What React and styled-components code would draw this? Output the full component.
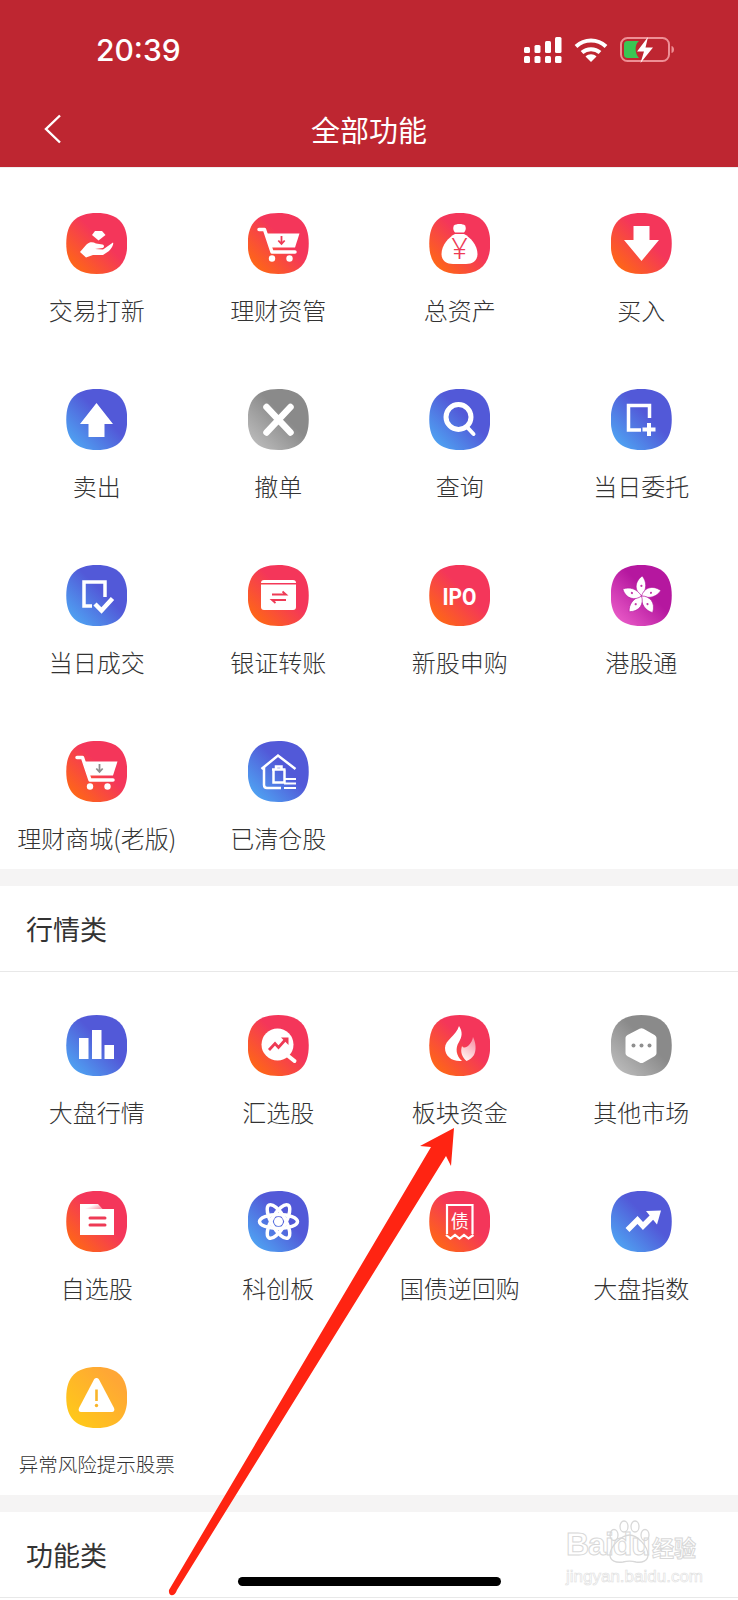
import React from 'react';
import styled, { createGlobalStyle } from 'styled-components';

const GlobalStyle = createGlobalStyle`
    html, body {
        margin: 0;
        padding: 0;
        background: #fff;
    }
    * {
        box-sizing: border-box;
    }
`;

const tones = {
    red: 'linear-gradient(45deg, #ff6a12 8%, #f4365a 58%)',
    blue: 'linear-gradient(45deg, #4fa6f3 8%, #5259d8 58%)',
    gray: 'linear-gradient(45deg, #bcbcbc 8%, #8a8a8a 58%)',
    pink: 'linear-gradient(45deg, #ea5cc8 8%, #b5179f 58%)',
    yellow: 'linear-gradient(45deg, #ffca18 8%, #ffa735 80%)',
};

const RED = '#ee3a55';

const Page = styled.div`
    position: relative;
    width: 738px;
    height: 1600px;
    overflow: hidden;
    background: #fff;
    font-family: "Noto Sans CJK SC", "Noto Sans", sans-serif;
`;

const Header = styled.header`
    height: 168px;
    background: #be2631;
    border-bottom: 1px solid #f1eeee;
    color: #fff;
`;

const StatusBar = styled.div`
    display: flex;
    align-items: center;
    justify-content: space-between;
    height: 96px;
    padding: 4px 0 0 96px;
`;

const Clock = styled.span`
    font-family: Inter, "Liberation Sans", sans-serif;
    font-size: 30px;
    font-weight: 500;
`;

const Icons = styled.div`
    display: flex;
    align-items: center;
    gap: 12px;
    padding-right: 62px;
`;

const NavBar = styled.div`
    position: relative;
    display: flex;
    align-items: center;
    justify-content: center;
    height: 66px;
`;

const BackIcon = styled.svg`
    position: absolute;
    left: 44px;
    top: 18px;
`;

const Title = styled.h1`
    margin: 0;
    font-size: 29px;
    font-weight: 400;
`;

const Grid = styled.div`
    display: grid;
    grid-template-columns: repeat(4, 1fr);
    row-gap: 63px;
    padding: ${(p) => (p.$first ? '45px' : '43px')} 6px 15px;
`;

const Cell = styled.div`
    display: flex;
    flex-direction: column;
    align-items: center;
`;

const Tile = styled.div`
    width: 61px;
    height: 61px;
    background: ${(p) => tones[p.$tone]};
    clip-path: path('M30.5 0C51 0 61 10 61 30.5C61 51 51 61 30.5 61C10 61 0 51 0 30.5C0 10 10 0 30.5 0Z');
`;

const Glyph = styled.svg`
    display: block;
    width: 61px;
    height: 61px;
`;

const Label = styled.div`
    margin-top: 20px;
    height: 32px;
    line-height: 32px;
    font-size: ${(p) => (p.$small ? '19.5px' : '24px')};
    font-weight: 300;
    color: #333;
    white-space: nowrap;
`;

const Gap = styled.div`
    height: 17px;
    background: #f5f4f4;
`;

const SectionHead = styled.div`
    display: flex;
    align-items: center;
    height: 86px;
    padding-left: 26px;
    border-bottom: 1px solid #e8e8e8;
    font-size: 27px;
    font-weight: 400;
    color: #333;
`;

const HomeBar = styled.div`
    position: absolute;
    left: 238px;
    top: 1577px;
    width: 263px;
    height: 9px;
    border-radius: 5px;
    background: #000;
`;

const ArrowMark = styled.svg`
    position: absolute;
    left: 0;
    top: 0;
    pointer-events: none;
`;

const Watermark = styled.div`
    position: absolute;
    left: 566px;
    top: 1520px;
    width: 132px;
    height: 64px;
    color: transparent;
    -webkit-text-stroke: 1px #d8d8d8;
    font-family: "Liberation Sans", sans-serif;
    white-space: nowrap;
`;

const MarkLine = styled.div`
    display: flex;
    align-items: flex-end;
    height: 44px;
    font-size: 32px;
    font-weight: 700;
    line-height: 40px;
    letter-spacing: -1px;
`;

const MarkCjk = styled.span`
    flex-shrink: 0;
    margin-left: 2px;
    font-family: "Noto Sans CJK SC", sans-serif;
    font-size: 22px;
    line-height: 36px;
    letter-spacing: 0;
`;

const Paw = styled.svg`
    position: absolute;
    left: 40px;
    top: 0;
`;

const MarkSub = styled.div`
    margin-top: 3px;
    font-size: 17px;
    line-height: 20px;
    -webkit-text-stroke: 0.6px #dedede;
`;

const Signal = () => (
    <svg width="38" height="26" viewBox="0 0 38 26" fill="#fff">
        <rect x="0" y="19" width="6" height="7" rx="1.5" />
        <rect x="10.500" y="19" width="6" height="7" rx="1.5" />
        <rect x="21" y="19" width="6" height="7" rx="1.5" />
        <rect x="31" y="19" width="6.500" height="7" rx="1.5" />
        <rect x="0" y="10" width="6" height="6" rx="1.5" />
        <rect x="10.500" y="8" width="6" height="8" rx="1.5" />
        <rect x="21" y="4" width="6" height="12" rx="1.5" />
        <rect x="31" y="0" width="6.500" height="16" rx="1.5" />
    </svg>
);

const Wifi = () => (
    <svg width="34" height="24" viewBox="0 0 34 24" fill="none" stroke="#fff" strokeWidth="4">
        <path d="M2 8.500C10.500 0.500 23.500 0.500 32 8.500" />
        <path d="M8 14.500C13 10 21 10 26 14.500" />
        <path d="M17 24L11.500 18.500C14.500 15.500 19.500 15.500 22.500 18.500Z" fill="#fff" stroke="none" />
    </svg>
);

const Battery = () => (
    <svg width="56" height="26" viewBox="0 0 56 26">
        <rect x="1" y="1" width="48" height="23" rx="6.5" fill="none" stroke="#ee8f95" strokeWidth="2" />
        <path d="M7.500 4H19C14.500 7 14.500 16 19 21H7.500C5 21 4 19.500 4 17.500V7.500C4 5.500 5 4 7.500 4Z" fill="#3ac653" />
        <path d="M51.500 9C53.500 9.500 54 11 54 12.500C54 14 53.500 15.500 51.500 16Z" fill="#ee8f95" />
        <path d="M28 0L17 14.500H24L20.500 26L33 10.500H25.500Z" fill="#fff" />
    </svg>
);

const Cart = ({ arrow }) => (
    <Glyph viewBox="0 0 61 61">
        <path d="M11 16.500H16.500L24 39H47" fill="none" stroke="#fff" strokeWidth="3.500" strokeLinecap="round" strokeLinejoin="round" />
        <path d="M18.500 20.500H51.500L47 34.500H23Z" fill="#fff" />
        <circle cx="24" cy="45.500" r="3.200" fill="#fff" />
        <circle cx="41.500" cy="45.500" r="3.200" fill="#fff" />
        <path d="M33.500 23V30M30.300 27.500L33.500 31L36.700 27.500" fill="none" stroke={arrow} strokeWidth="1.800" />
    </Glyph>
);

const icons = {
    hand: (
        <Glyph viewBox="0 0 61 61">
            <path d="M29 18H36L39.500 22L32.500 27.500L26 22Z" fill="#fff" />
            <path d="M14 39L20.500 31.500C24 28.500 27 29 30 30.500L36.500 31.500C38.500 32 38.500 34.500 36.500 35L29 36L37 36.500L47 29.500C48 31 46 35 43 38L37 42H27L20 44.500Z" fill="#fff" />
        </Glyph>
    ),
    cartRed: <Cart arrow={RED} />,
    bag: (
        <Glyph viewBox="0 0 61 61">
            <path d="M25 12.500C27 10.500 34 10.500 36 12.500C37.500 15 36.500 18 35 19.500H26C24.500 18 23.500 15 25 12.500Z" fill="#fff" />
            <path d="M26 21H35C41 24 48.500 32 48.500 41C48.500 48 43 51 37 51H24C18 51 12.500 48 12.500 41C12.500 32 20 24 26 21Z" fill="#fff" />
            <text x="30.500" y="46" textAnchor="middle" fontFamily="Noto Sans, sans-serif" fontWeight="300" fontSize="29" fill={RED}>¥</text>
        </Glyph>
    ),
    down: (
        <Glyph viewBox="0 0 61 61">
            <polygon points="22.500,13 38.500,13 38.500,27 48,27 30.500,48 13,27 22.500,27" fill="#fff" />
        </Glyph>
    ),
    up: (
        <Glyph viewBox="0 0 61 61">
            <polygon points="30.500,14 47,35 38.500,35 38.500,48 22.500,48 22.500,35 14,35" fill="#fff" />
        </Glyph>
    ),
    cancel: (
        <Glyph viewBox="0 0 61 61">
            <path d="M18.500 18L42.500 43.500M42.500 18L18.500 43.500" stroke="#fff" strokeWidth="6.500" strokeLinecap="round" />
        </Glyph>
    ),
    search: (
        <Glyph viewBox="0 0 61 61">
            <circle cx="29.500" cy="28" r="12.500" fill="none" stroke="#fff" strokeWidth="5" />
            <path d="M38 38L44.500 45" stroke="#fff" strokeWidth="4" strokeLinecap="round" />
        </Glyph>
    ),
    docPlus: (
        <Glyph viewBox="0 0 61 61">
            <path d="M38.500 29V16.500H17.500V41H30" fill="none" stroke="#fff" strokeWidth="3.500" />
            <path d="M38 34V47M31.500 40.500H44.500" stroke="#fff" strokeWidth="4" />
        </Glyph>
    ),
    docCheck: (
        <Glyph viewBox="0 0 61 61">
            <path d="M39 32V17H18V41H26" fill="none" stroke="#fff" strokeWidth="3.500" />
            <path d="M29 39L35.500 45.500L46.500 33.500" fill="none" stroke="#fff" strokeWidth="4.500" />
        </Glyph>
    ),
    transfer: (
        <Glyph viewBox="0 0 61 61">
            <path d="M16 15H45C47 15 48 16 48 18H13C13 16 14 15 16 15Z" fill="#fff" />
            <path d="M13 19.500H48V42C48 44 47 45 45 45H16C14 45 13 44 13 42Z" fill="#fff" />
            <path d="M24 29.500H38L34.500 26.500M38 35H24L27.500 38" fill="none" stroke={RED} strokeWidth="1.800" />
        </Glyph>
    ),
    ipo: (
        <Glyph viewBox="0 0 61 61">
            <text x="30.500" y="39.500" textAnchor="middle" fontFamily="Roboto, sans-serif" fontWeight="700" fontSize="24" textLength="34" lengthAdjust="spacingAndGlyphs" fill="#fff">IPO</text>
        </Glyph>
    ),
    bauhinia: (
        <Glyph viewBox="0 0 61 61">
            {[0, 72, 144, 216, 288].map((deg) => (
                <g key={deg} transform={`translate(30.500 31) rotate(${deg + 5})`}>
                    <path d="M0 0C-7 -4 -9 -13 -1 -20C4 -15 5 -7 0 0Z" fill="#fff" stroke="#b5179f" strokeWidth="0.600" />
                    <circle cx="-1" cy="-10" r="1.100" fill="#c23aa8" />
                </g>
            ))}
        </Glyph>
    ),
    cartGray: <Cart arrow="#8d8d8d" />,
    house: (
        <Glyph viewBox="0 0 61 61">
            <g fill="none" stroke="#fff" strokeWidth="2.500">
                <path d="M13.500 28L30 14.500L47.500 28" />
                <path d="M16 26V44C16 46 17 47 19 47H33" />
                <path d="M24 28.500H37.500M25.500 28.500V41.500H36.500V28.500M28 28.500V25.500H33.500V28.500" />
            </g>
            <path d="M36 38H48M36 42.500H48M36 47H48" stroke="#fff" strokeWidth="2" />
        </Glyph>
    ),
    bars: (
        <Glyph viewBox="0 0 61 61" fill="#fff">
            <rect x="13" y="23" width="9.500" height="21" />
            <rect x="26" y="15" width="9.500" height="29" />
            <rect x="38.500" y="30" width="9.500" height="14" />
        </Glyph>
    ),
    pick: (
        <Glyph viewBox="0 0 61 61">
            <circle cx="29.500" cy="29.500" r="16" fill="#fff" />
            <path d="M39 40L46.500 46" stroke="#fff" strokeWidth="4" strokeLinecap="round" />
            <path d="M21 35L27 28.500L30.500 32.500L38 24" fill="none" stroke={RED} strokeWidth="2.800" />
            <path d="M33 22.500H40.500V30Z" fill={RED} />
        </Glyph>
    ),
    flame: (
        <Glyph viewBox="0 0 61 61">
            <defs>
                <linearGradient id="flameFade" x1="0.300" y1="1" x2="0.700" y2="0">
                    <stop offset="0" stopColor="#fff" stopOpacity="0.95" />
                    <stop offset="1" stopColor="#fff" stopOpacity="0.45" />
                </linearGradient>
            </defs>
            <path d="M44 22C47 28 47.500 35 45 40C43 43 40.500 45 37.500 46C33 42 31 37 33 31C35 34 38 32 40 30C42 28 43.500 25 44 22Z" fill="url(#flameFade)" />
            <path d="M30 11C34 17 33 22 30 27C26 33 27 41 33 46C23 47 16 41 16 33C16 25 27 21 30 11Z" fill="#fff" />
        </Glyph>
    ),
    hexagon: (
        <Glyph viewBox="0 0 61 61">
            <path d="M28.500 13.700C29.700 13 31.300 13 32.500 13.700L43.500 20C44.800 20.700 45.500 22 45.500 23.300V38C45.500 39.300 44.800 40.500 43.500 41.200L32.500 47.400C31.300 48.100 29.700 48.100 28.500 47.400L16.500 41.200C15.200 40.500 14.500 39.300 14.500 38V23.300C14.500 22 15.200 20.700 16.500 20Z" fill="#fff" />
            <circle cx="22.500" cy="30.500" r="2" fill="#8f8f8f" />
            <circle cx="30.500" cy="30.500" r="2" fill="#8f8f8f" />
            <circle cx="38.500" cy="30.500" r="2" fill="#8f8f8f" />
        </Glyph>
    ),
    folder: (
        <Glyph viewBox="0 0 61 61">
            <defs>
                <linearGradient id="tabFade" x1="0" y1="0" x2="1" y2="0.500">
                    <stop offset="0.500" stopColor="#fff" />
                    <stop offset="1" stopColor="#fff" stopOpacity="0.55" />
                </linearGradient>
            </defs>
            <path d="M14 13H32L37 18.500H14Z" fill="url(#tabFade)" />
            <path d="M14 18H48V44H14Z" fill="#fff" />
            <path d="M24 27H39M24 34H39" stroke={RED} strokeWidth="3" strokeLinecap="round" />
        </Glyph>
    ),
    atom: (
        <Glyph viewBox="0 0 61 61">
            <g fill="none" stroke="#fff" strokeWidth="3.500">
                <ellipse cx="30.500" cy="30.500" rx="19" ry="7" />
                <ellipse cx="30.500" cy="30.500" rx="19" ry="7" transform="rotate(60 30.500 30.500)" />
                <ellipse cx="30.500" cy="30.500" rx="19" ry="7" transform="rotate(120 30.500 30.500)" />
            </g>
            <circle cx="30.500" cy="30.500" r="4.500" fill="#fff" />
        </Glyph>
    ),
    bond: (
        <Glyph viewBox="0 0 61 61">
            <path d="M18 43V14H43.500V43" fill="none" stroke="#fff" strokeWidth="2.200" />
            <path d="M17 44L21.500 47.500L26 44L30.500 47.500L35 44L39.500 47.500L44.500 44" fill="none" stroke="#fff" strokeWidth="2.200" />
            <text x="30.700" y="36.500" textAnchor="middle" fontFamily="Noto Sans CJK SC, sans-serif" fontSize="18" fill="#fff">债</text>
        </Glyph>
    ),
    trend: (
        <Glyph viewBox="0 0 61 61">
            <path d="M16.500 39L26.500 29L32 35L43 24" fill="none" stroke="#fff" strokeWidth="5.500" />
            <polygon points="35,20 50,19.500 46,33.500" fill="#fff" />
        </Glyph>
    ),
    warn: (
        <Glyph viewBox="0 0 61 61">
            <path d="M28 12.500C29.200 10.500 31.800 10.500 33 12.500L48 41C49 43 48 45 46 45H15C13 45 12 43 13 41Z" fill="#fff" />
            <path d="M30.500 22.500V34" stroke="#f9b52a" strokeWidth="2.600" />
            <circle cx="30.500" cy="38.500" r="1.700" fill="#f9b52a" />
        </Glyph>
    ),
};

const tradeItems = [
    { label: '交易打新', tone: 'red', icon: 'hand' },
    { label: '理财资管', tone: 'red', icon: 'cartRed' },
    { label: '总资产', tone: 'red', icon: 'bag' },
    { label: '买入', tone: 'red', icon: 'down' },
    { label: '卖出', tone: 'blue', icon: 'up' },
    { label: '撤单', tone: 'gray', icon: 'cancel' },
    { label: '查询', tone: 'blue', icon: 'search' },
    { label: '当日委托', tone: 'blue', icon: 'docPlus' },
    { label: '当日成交', tone: 'blue', icon: 'docCheck' },
    { label: '银证转账', tone: 'red', icon: 'transfer' },
    { label: '新股申购', tone: 'red', icon: 'ipo' },
    { label: '港股通', tone: 'pink', icon: 'bauhinia' },
    { label: '理财商城(老版)', tone: 'red', icon: 'cartGray' },
    { label: '已清仓股', tone: 'blue', icon: 'house' },
];

const marketItems = [
    { label: '大盘行情', tone: 'blue', icon: 'bars' },
    { label: '汇选股', tone: 'red', icon: 'pick' },
    { label: '板块资金', tone: 'red', icon: 'flame' },
    { label: '其他市场', tone: 'gray', icon: 'hexagon' },
    { label: '自选股', tone: 'red', icon: 'folder' },
    { label: '科创板', tone: 'blue', icon: 'atom' },
    { label: '国债逆回购', tone: 'red', icon: 'bond' },
    { label: '大盘指数', tone: 'blue', icon: 'trend' },
    { label: '异常风险提示股票', tone: 'yellow', icon: 'warn', small: true },
];

const ItemGrid = ({ items, first }) => (
    <Grid $first={first}>
        {items.map((item) => (
            <Cell key={item.label}>
                <Tile $tone={item.tone}>{icons[item.icon]}</Tile>
                <Label $small={item.small}>{item.label}</Label>
            </Cell>
        ))}
    </Grid>
);

const App = () => {
    return (
        <Page>
            <GlobalStyle />
            <Header>
                <StatusBar>
                    <Clock>20:39</Clock>
                    <Icons>
                        <Signal />
                        <Wifi />
                        <Battery />
                    </Icons>
                </StatusBar>
                <NavBar>
                    <BackIcon width="18" height="30" viewBox="0 0 18 30" fill="none" stroke="#fff" strokeWidth="2.400">
                        <path d="M16 1.500L2 15L16 28.500" />
                    </BackIcon>
                    <Title>全部功能</Title>
                </NavBar>
            </Header>
            <ItemGrid items={tradeItems} first />
            <Gap />
            <SectionHead>行情类</SectionHead>
            <ItemGrid items={marketItems} />
            <Gap />
            <SectionHead>功能类</SectionHead>

            <Watermark>
                <Paw width="46" height="44" viewBox="0 0 46 44" fill="none" stroke="#d8d8d8" strokeWidth="1.300">
                    <ellipse cx="8" cy="15" rx="4" ry="5.500" />
                    <ellipse cx="18" cy="6.500" rx="4" ry="5.500" />
                    <ellipse cx="29" cy="6.500" rx="4" ry="5.500" />
                    <ellipse cx="39" cy="15" rx="4" ry="5.500" />
                    <path d="M23.500 15C31 15 42 26 42 35C42 41 36 43 30 42C26 41 21 41 17 42C10 43 4 41 4 35C4 26 16 15 23.500 15Z" />
                </Paw>
                <MarkLine>
                    Bai<span>du</span>
                    <MarkCjk>经验</MarkCjk>
                </MarkLine>
                <MarkSub>jingyan.baidu.com</MarkSub>
            </Watermark>

            <HomeBar />

            <ArrowMark width="738" height="1600" viewBox="0 0 738 1600">
                <path d="M454 1128L451 1166L446 1156L177 1590C175 1597 168 1597 169 1590L431 1147L420 1146Z" fill="#ff2412" />
            </ArrowMark>
        </Page>
    );
};

export default App;
